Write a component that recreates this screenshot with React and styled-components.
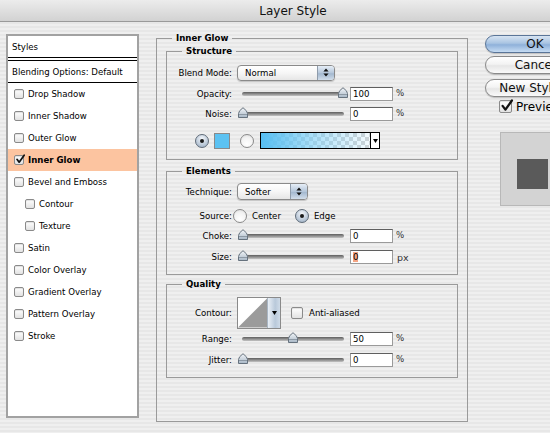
import React from 'react';
import styled, { createGlobalStyle } from 'styled-components';

const Global = createGlobalStyle`
  html, body { margin: 0; padding: 0; width: 550px; height: 433px; overflow: hidden; }
  body { font-family: "DejaVu Sans", Verdana, sans-serif; font-size: 8.6px; color: #000; }
  #root { width: 550px; height: 433px; overflow: hidden; }
`;

const Window = styled.div`
  width: 586px;
  height: 433px;
  display: flex;
  flex-direction: column;
  background: repeating-linear-gradient(to bottom, #efefef 0 2px, #e7e7e7 2px 4px);
`;

const TitleBar = styled.div`
  height: 21px;
  flex: none;
  border-bottom: 1px solid #9a9a9a;
  display: flex;
  align-items: center;
  justify-content: center;
  background: linear-gradient(#ececec, #d2d2d2);
  font-size: 12px;
  color: #111;
`;

const Body = styled.div`
  display: flex;
  align-items: flex-start;
  padding-left: 6px;
`;

/* ---------- left list ---------- */
const StylesPanel = styled.div`
  margin-top: 12px;
  width: 133px;
  height: 384px;
  box-sizing: border-box;
  border: 2px solid #a2a2a2;
  background: #fff;
  display: flex;
  flex-direction: column;
`;

const HeadRow = styled.div`
  height: 21px;
  flex: none;
  display: flex;
  align-items: center;
  padding-left: 4px;
  border-bottom: 1px solid #000;
  border-top: ${p => (p.$topRule ? '1px solid #000' : 'none')};
  margin-top: ${p => (p.$topRule ? '2px' : '0')};
`;

const ListRow = styled.div`
  height: 22px;
  flex: none;
  display: flex;
  align-items: center;
  gap: 4px;
  padding-left: ${p => p.$indent}px;
  background: ${p => (p.$active ? '#fcc4a0' : 'transparent')};
  font-weight: ${p => (p.$active ? 'bold' : 'normal')};
`;

const CheckBoxBox = styled.span`
  position: relative;
  flex: none;
  width: ${p => p.$size}px;
  height: ${p => p.$size}px;
  box-sizing: border-box;
  border: 1px solid #8a8a8a;
  border-radius: 2px;
  background: linear-gradient(#ffffff, #e2e2e2);
  box-shadow: inset 0 1px 1px rgba(0, 0, 0, 0.12);
  svg { position: absolute; left: 0; top: -2px; overflow: visible; }
`;

const CheckBox = ({ checked, size = 10 }) => (
  <CheckBoxBox $size={size}>
    {checked && (
      <svg width={size} height={size} viewBox="0 0 12 12">
        <path d="M2.4 6.4 L5 9.8 L11 1.4" stroke="#111" strokeWidth="2.1" fill="none" strokeLinecap="round" strokeLinejoin="round" />
      </svg>
    )}
  </CheckBoxBox>
);

/* ---------- main groups ---------- */
const Outer = styled.fieldset`
  margin: 10px 0 0 17px;
  width: 312px;
  box-sizing: border-box;
  border: 1px solid #9a9a9a;
  padding: 1px 9px 43px 9px;
  min-inline-size: 0;
`;

const Group = styled.fieldset`
  margin: ${p => p.$mt}px 0 0 0;
  border: 1px solid #9a9a9a;
  padding: ${p => p.$pt}px 9px ${p => p.$pb}px 9px;
  min-inline-size: 0;
`;

const Legend = styled.legend`
  padding: 0 4px;
  margin-left: 6px;
  line-height: 12px;
  font-weight: bold;
`;

const Row = styled.div`
  height: ${p => p.$h}px;
  display: flex;
  align-items: center;
  padding-left: ${p => p.$pl || 0}px;
`;

const Label = styled.span`
  width: 56px;
  flex: none;
  text-align: right;
  margin-right: ${p => (p.$gap !== undefined ? p.$gap : 5)}px;
  white-space: nowrap;
`;

const Popup = styled.div`
  width: ${p => p.$w}px;
  height: ${p => p.$h}px;
  box-sizing: border-box;
  border: 1px solid #8a8a8a;
  border-radius: 4px;
  background: linear-gradient(#ffffff, #f6f6f6 50%, #e6e6e6);
  box-shadow: 0 1px 1px rgba(0, 0, 0, 0.18);
  display: flex;
  align-items: center;
  overflow: hidden;
`;

const PopupText = styled.span`
  flex: 1;
  padding-left: 7px;
`;

const PopupArrows = styled.span`
  width: 16px;
  align-self: stretch;
  border-left: 1px solid #8f9cab;
  background: linear-gradient(#e6eef7, #b4c6da 50%, #a3b8cf 55%, #d2deeb);
  display: flex;
  align-items: center;
  justify-content: center;
`;

const UpDown = () => (
  <svg width="6" height="9" viewBox="0 0 6 9">
    <path d="M3 0.5 L5.6 3.6 H0.4 Z M3 8.5 L5.6 5.4 H0.4 Z" fill="#111" />
  </svg>
);

const SliderBox = styled.div`
  position: relative;
  width: 110px;
  height: 14px;
  flex: none;
  display: flex;
  align-items: center;
`;

const Track = styled.div`
  margin: 0 3px 0 5px;
  flex: 1;
  height: 4px;
  border-radius: 2px;
  background: linear-gradient(#5e5e5e, #8e8e8e 50%, #c4c4c4);
`;

const Thumb = styled.svg`
  position: absolute;
  top: 0;
`;

const Slider = ({ value }) => (
  <SliderBox>
    <Track />
    <Thumb width="10" height="11" viewBox="0 0 10 11" style={{ left: `${value + 0.5}px` }}>
      <defs>
        <linearGradient id={`tg${value}`} x1="0" y1="0" x2="0" y2="1">
          <stop offset="0" stopColor="#f4f7fa" />
          <stop offset="1" stopColor="#a8b7c6" />
        </linearGradient>
      </defs>
      <path d="M0.5 10.5 V6.5 Q0.5 4 5 0.7 Q9.5 4 9.5 6.5 V10.5 Z" fill={`url(#tg${value})`} stroke="#66727e" strokeWidth="1" />
      <path d="M1 7.5 H9" stroke="#8d99a5" strokeWidth="1" />
    </Thumb>
  </SliderBox>
);

const Field = styled.div`
  margin-left: 3px;
  width: 43px;
  height: 14px;
  box-sizing: border-box;
  border: 1px solid #9a9a9a;
  border-top-color: #5f5f5f;
  background: #fff;
  padding-left: 2px;
  display: flex;
  align-items: center;
`;

const Selected = styled.span`
  background: #f4a584;
`;

const Unit = styled.span`
  margin-left: ${p => p.$ml || 3}px;
  margin-top: ${p => p.$mt || 0}px;
  font-size: ${p => p.$fs || 8.6}px;
  color: #333;
`;

const Radio = styled.span`
  flex: none;
  width: 14px;
  height: 14px;
  box-sizing: border-box;
  border-radius: 50%;
  border: 1px solid ${p => (p.$on ? '#5f6b78' : '#8a8a8a')};
  background: ${p =>
    p.$on
      ? 'radial-gradient(circle at 50% 30%, #f3f6fa, #b3c2d3 70%, #98aabe)'
      : 'radial-gradient(circle at 50% 75%, #ffffff, #f2f2f2 60%, #d8d8d8)'};
  display: flex;
  align-items: center;
  justify-content: center;
  margin-left: ${p => p.$ml || 0}px;
  margin-right: ${p => p.$mr || 0}px;
  &::after {
    content: '';
    display: ${p => (p.$on ? 'block' : 'none')};
    width: 4px;
    height: 4px;
    border-radius: 50%;
    background: #1a1a1a;
  }
`;

const Swatch = styled.span`
  flex: none;
  width: 16px;
  height: 16px;
  box-sizing: border-box;
  border: 1px solid #8a8a8a;
  background: #5cc2f2;
  margin-left: 5px;
`;

const GradientBar = styled.div`
  margin-left: 6px;
  width: 120px;
  height: 17px;
  box-sizing: border-box;
  border: 1px solid #000;
  display: flex;
  background:
    linear-gradient(to right, rgba(86, 190, 242, 1) 0%, rgba(120, 205, 245, 0.6) 45%, rgba(255, 255, 255, 0) 100%),
    repeating-conic-gradient(#d4d4d4 0 25%, #ffffff 0 50%) 0 0 / 8px 8px;
`;

const GradientFill = styled.span`
  flex: 1;
`;

const DropSeg = styled.span`
  width: 8px;
  flex: none;
  border-left: 1px solid #000;
  background: #fff;
  display: flex;
  align-items: center;
  justify-content: center;
`;

const DownArrow = () => (
  <svg width="5" height="4" viewBox="0 0 5 4">
    <path d="M0 0 H5 L2.5 4 Z" fill="#000" />
  </svg>
);

const RadioLabel = styled.span`
  margin-left: 5px;
  margin-right: ${p => p.$mr || 0}px;
`;

const ContourBox = styled.div`
  width: 44px;
  height: 32px;
  box-sizing: border-box;
  border: 1px solid #8a8a8a;
  background: #fff;
  display: flex;
  margin-right: 10px;
`;

const ContourStrip = styled.span`
  width: 12px;
  flex: none;
  border-left: 1px solid #a9b6c4;
  background: linear-gradient(to right, #e9eff6, #b9c9da 60%, #cfdbe8);
  display: flex;
  align-items: center;
  justify-content: center;
`;

const CheckLabel = styled.span`
  margin-left: ${p => p.$ml}px;
  font-size: ${p => p.$fs || 8.6}px;
`;

/* ---------- right column ---------- */
const Side = styled.div`
  margin: 13px 0 0 17px;
  display: flex;
  flex-direction: column;
  align-items: flex-start;
`;

const Button = styled.div`
  margin-top: ${p => p.$mt}px;
  width: 100px;
  height: 18px;
  box-sizing: border-box;
  border-radius: 9px;
  border: 1px solid ${p => (p.$default ? '#5a7598' : '#8a8a8a')};
  background: ${p =>
    p.$default
      ? 'linear-gradient(#d7e4f2, #a9c4e2 45%, #8fb1da 55%, #c6dcf3)'
      : 'linear-gradient(#ffffff, #f3f3f3 45%, #e6e6e6 55%, #fafafa)'};
  box-shadow: 0 1px 1px rgba(0, 0, 0, 0.2);
  display: flex;
  align-items: center;
  justify-content: center;
  font-size: 12px;
  color: #111;
`;

const PreviewRow = styled.div`
  margin: 3px 0 0 14px;
  height: 13px;
  display: flex;
  align-items: center;
`;

const PreviewBox = styled.div`
  margin: 19px 0 0 15px;
  width: 84px;
  height: 74px;
  box-sizing: border-box;
  border: 1px solid #b8b8b8;
  background: #d3d3d3;
  padding: 26px 0 0 16px;
`;

const PreviewSquare = styled.div`
  width: 31px;
  height: 30px;
  background: #5a5a5a;
`;

const listItems = [
  { name: 'Drop Shadow', indent: 6 },
  { name: 'Inner Shadow', indent: 6 },
  { name: 'Outer Glow', indent: 6 },
  { name: 'Inner Glow', indent: 6, active: true },
  { name: 'Bevel and Emboss', indent: 6 },
  { name: 'Contour', indent: 17 },
  { name: 'Texture', indent: 17 },
  { name: 'Satin', indent: 6 },
  { name: 'Color Overlay', indent: 6 },
  { name: 'Gradient Overlay', indent: 6 },
  { name: 'Pattern Overlay', indent: 6 },
  { name: 'Stroke', indent: 6 },
];

const SliderRow = ({ h, label, value, text, unit = '%', selected }) => (
  <Row $h={h}>
    <Label>{label}</Label>
    <Slider value={value} />
    <Field>{selected ? <Selected>{text}</Selected> : text}</Field>
    {unit === '%' ? <Unit $mt={-3}>%</Unit> : <Unit $ml={4} $fs={9.5}>{unit}</Unit>}
  </Row>
);

export default function App() {
  return (
    <>
      <Global />
      <Window>
        <TitleBar>Layer Style</TitleBar>
        <Body>
          <StylesPanel>
            <HeadRow>Styles</HeadRow>
            <HeadRow $topRule>Blending Options: Default</HeadRow>
            {listItems.map(it => (
              <ListRow key={it.name} $indent={it.indent} $active={it.active}>
                <CheckBox checked={it.active} />
                <span>{it.name}</span>
              </ListRow>
            ))}
          </StylesPanel>

          <Outer>
            <Legend>Inner Glow</Legend>
            <Group $mt={0} $pt={5} $pb={1}>
              <Legend>Structure</Legend>
              <Row $h={21}>
                <Label>Blend Mode:</Label>
                <Popup $w={98} $h={16}>
                  <PopupText>Normal</PopupText>
                  <PopupArrows><UpDown /></PopupArrows>
                </Popup>
              </Row>
              <SliderRow h={22} label="Opacity:" value={100} text="100" />
              <SliderRow h={18} label="Noise:" value={0} text="0" />
              <Row $h={35} $pl={19}>
                <Radio $on />
                <Swatch />
                <Radio $ml={10} />
                <GradientBar>
                  <GradientFill />
                  <DropSeg><DownArrow /></DropSeg>
                </GradientBar>
              </Row>
            </Group>

            <Group $mt={5} $pt={0} $pb={6}>
              <Legend>Elements</Legend>
              <Row $h={29}>
                <Label>Technique:</Label>
                <Popup $w={71} $h={17}>
                  <PopupText>Softer</PopupText>
                  <PopupArrows><UpDown /></PopupArrows>
                </Popup>
              </Row>
              <Row $h={20}>
                <Label $gap={1}>Source:</Label>
                <Radio />
                <RadioLabel $mr={14}>Center</RadioLabel>
                <Radio $on />
                <RadioLabel>Edge</RadioLabel>
              </Row>
              <SliderRow h={20} label="Choke:" value={0} text="0" />
              <SliderRow h={22} label="Size:" value={0} text="0" unit="px" selected />
            </Group>

            <Group $mt={3} $pt={6} $pb={6}>
              <Legend>Quality</Legend>
              <Row $h={33}>
                <Label>Contour:</Label>
                <ContourBox>
                  <svg width="30" height="30" viewBox="0 0 30 30">
                    <polygon points="0,30 30,0 30,30" fill="#9b9b9b" />
                  </svg>
                  <ContourStrip><DownArrow /></ContourStrip>
                </ContourBox>
                <CheckBox size={12} />
                <CheckLabel $ml={6}>Anti-aliased</CheckLabel>
              </Row>
              <SliderRow h={20} label="Range:" value={50} text="50" />
              <SliderRow h={22} label="Jitter:" value={0} text="0" />
            </Group>
          </Outer>

          <Side>
            <Button $mt={0} $default>OK</Button>
            <Button $mt={3}>Cancel</Button>
            <Button $mt={5}>New Style...</Button>
            <PreviewRow>
              <CheckBox checked size={13} />
              <CheckLabel $ml={4} $fs={12}>Preview</CheckLabel>
            </PreviewRow>
            <PreviewBox>
              <PreviewSquare />
            </PreviewBox>
          </Side>
        </Body>
      </Window>
    </>
  );
}
